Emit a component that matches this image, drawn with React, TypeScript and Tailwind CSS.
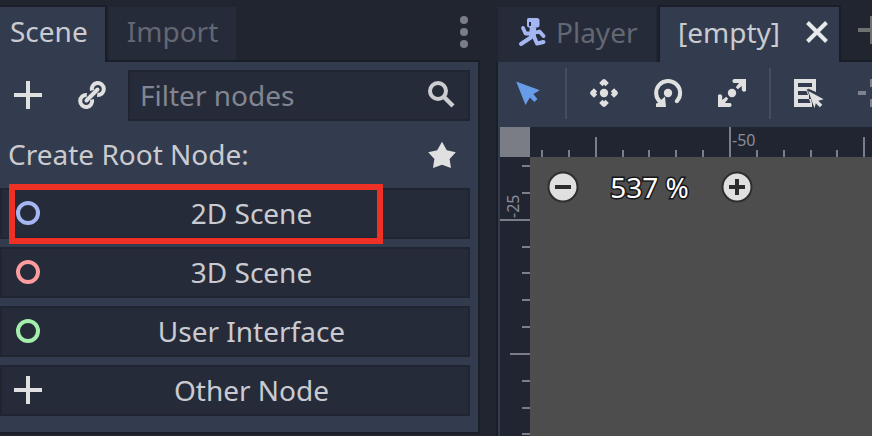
import type { ReactNode } from "react";

const topTicks = [541, 568, 595, 622, 648, 675, 702, 729, 756, 783, 810, 836, 863];
const leftTicks = [165, 192, 219, 246, 272, 299, 326, 353, 380, 407, 433];

function Icon({ children, className = "" }: { children: ReactNode; className?: string }) {
  return (
    <svg viewBox="0 0 32 32" fill="none" className={`size-8 shrink-0 ${className}`}>
      {children}
    </svg>
  );
}

function AddIcon({ className = "text-[#e0e0e0]" }: { className?: string }) {
  return (
    <Icon className={className}>
      <path d="M14 2h4v12h12v4H18v12h-4V18H2v-4h12z" fill="currentColor" />
    </Icon>
  );
}

function LinkIcon() {
  return (
    <Icon className="text-[#e0e0e0]">
      <g stroke="currentColor" strokeWidth="4">
        <path d="M16 11.500A6 6 0 1 1 21.200 16" />
        <path d="M10.800 16A6 6 0 1 0 16 20.500" />
        <path d="M10.500 21.500L21.500 10.500" strokeLinecap="round" />
      </g>
    </Icon>
  );
}

function SearchIcon() {
  return (
    <Icon className="text-[#cccdd0]">
      <circle cx="12" cy="12" r="8" stroke="currentColor" strokeWidth="4" />
      <path d="M17.500 17.500L27 27" stroke="currentColor" strokeWidth="4.400" />
    </Icon>
  );
}

function NodeCircle({ className }: { className: string }) {
  return (
    <Icon className={className}>
      <circle cx="16" cy="16" r="10" stroke="currentColor" strokeWidth="4" />
    </Icon>
  );
}

function RunnerIcon() {
  return (
    <Icon className="text-[#a5b7f3]">
      <path d="M12.500 2h8.500q2.500 0 2.500 2.500v4.500q0 2.500-2.500 2.500H13q-2 0-2-2V4q0-2 1.500-2z" fill="currentColor" />
      <path d="M14 6v4" stroke="#262b3a" strokeWidth="2" />
      <g stroke="currentColor" strokeWidth="4" strokeLinecap="round" strokeLinejoin="round">
        <path d="M17 11l-.5 10" strokeWidth="6.500" strokeLinecap="butt" />
        <path d="M7 12l2.500 5.500h6l8-2 4 4.500" strokeWidth="3.800" />
        <path d="M15.500 21L5 28" />
        <path d="M18 20.500l3 7 6.500-1.500" />
      </g>
    </Icon>
  );
}

function MoveIcon() {
  return (
    <Icon className="text-[#e0e0e0]">
      <circle cx="16" cy="16" r="4.200" fill="currentColor" />
      <path
        d="M12.800 7.600l3.200-3.200 3.200 3.200M12.800 24.400l3.200 3.200 3.200-3.200M7.600 12.800l-3.200 3.200 3.200 3.200M24.400 12.800l3.200 3.200-3.200 3.200"
        stroke="currentColor"
        strokeWidth="4.600"
        strokeLinejoin="round"
      />
    </Icon>
  );
}

function RotateIcon() {
  return (
    <Icon className="text-[#e0e0e0]">
      <circle cx="16" cy="16" r="4.200" fill="currentColor" />
      <path d="M8.300 25A12 12 0 1 1 25 24" stroke="currentColor" strokeWidth="4" />
      <circle cx="24.800" cy="24.200" r="2" fill="currentColor" />
      <path d="M4 30h10l-1-10.500-3.500 3L6 26l-2 .500z" fill="currentColor" />
    </Icon>
  );
}

function ScaleIcon() {
  return (
    <Icon className="text-[#e0e0e0]">
      <circle cx="16" cy="16" r="4.200" fill="currentColor" />
      <path
        d="M18 2h12v12q-3 1.800-4.200-1V9l-4 3.200-2-2L23 6h-5.500q-2.500-2.500.500-4zM14 30H2V18q3-1.800 4.200 1v4l4-3.200 2 2L9 26h5.500q2.500 2.500-.500 4z"
        fill="currentColor"
      />
    </Icon>
  );
}

function ListSelectIcon() {
  return (
    <Icon className="text-[#e0e0e0]">
      <path d="M2 2h22v13l-8-3.500L18 18h-1v4h2l1 4v4H2zM6 6v4h14V6zM6 14v4h10l-1.500-4zM6 22v4h12.500L17 22z" fill="currentColor" fillRule="evenodd" />
      <path d="M14.500 12L33 19l-9.300 14z" fill="#333b4e" />
      <path d="M16.300 14L31.700 22.300l-5.400 1.500 4 4-2.500 2.500-4-4-1.300 5z" fill="currentColor" />
    </Icon>
  );
}

function ZoomButton({ plus = false }: { plus?: boolean }) {
  return (
    <Icon>
      <circle cx="16" cy="16" r="14.500" fill="#e0e0e0" stroke="#2e2e2e" strokeWidth="2" />
      <path d={plus ? "M8 16h16M16 8v16" : "M8 16h16"} stroke="#2d2d2d" strokeWidth="4" />
    </Icon>
  );
}

function RootButton({ icon, label }: { icon: ReactNode; label: string }) {
  return (
    <button className="relative flex h-[51px] w-[470px] items-center justify-center border-2 border-[#212531] bg-[#262b3a] pb-px pl-[33px]">
      <span className="absolute left-2.5 top-[7px]">{icon}</span>
      <span>{label}</span>
    </button>
  );
}

function SceneDock() {
  return (
    <section className="flex h-[434px] w-[480px] shrink-0 flex-col">
      <header className="flex h-[62px] shrink-0 pt-[5px]">
        <div className="flex w-[107px] items-center border-r-2 border-t-2 border-[#1a1e28] bg-[#333b4e] pb-[7px] pl-2.5">Scene</div>
        <div className="flex flex-1 border-b-2 border-[#1a1e28] pl-0.5 pt-0.5">
          <div className="flex w-[127px] items-center justify-center bg-[#262b3a] pb-[5px] text-[#636771]">Import</div>
          <Icon className="ml-auto mt-[9px] text-[#7b7e87]">
            <g fill="currentColor">
              <circle cx="16" cy="4" r="4" />
              <circle cx="16" cy="16" r="4" />
              <circle cx="16" cy="28" r="4" />
            </g>
          </Icon>
        </div>
      </header>
      <div className="flex-1 border-b-2 border-r-2 border-[#1a1e28] bg-[#333b4e] pt-2">
        <div className="flex h-[51px] items-start pl-3">
          <AddIcon className="mt-[9px] text-[#e0e0e0]" />
          <span className="ml-8 mt-[9px]"><LinkIcon /></span>
          <div className="ml-5 flex h-[51px] w-[342px] items-center justify-between border-2 border-[#212531] bg-[#262b3a] pb-px pl-2.5 pr-2.5 text-[#828690]">
            <span>Filter nodes</span>
            <SearchIcon />
          </div>
        </div>
        <div className="flex h-[67px] items-center justify-between pb-px pl-2 pr-5">
          <span>Create Root Node:</span>
          <Icon className="text-[#e0e0e0]">
            <path d="M16 3.700l4.800 8.500 9 2-6.200 6.800 1.400 9L16 26.700l-9 3.300 1.400-9L2.200 14.200l9-2z" fill="currentColor" />
          </Icon>
        </div>
        <div className="relative flex flex-col gap-2">
          <RootButton icon={<NodeCircle className="text-[#a5b7f3]" />} label="2D Scene" />
          <RootButton icon={<NodeCircle className="text-[#fc9c9c]" />} label="3D Scene" />
          <RootButton icon={<NodeCircle className="text-[#a5efac]" />} label="User Interface" />
          <RootButton icon={<AddIcon />} label="Other Node" />
          <div className="absolute -top-1 left-[9px] h-[60px] w-[374px] border-[6px] border-[#ee3124]" />
        </div>
      </div>
    </section>
  );
}

function Toolbar() {
  return (
    <div className="flex h-[65px] shrink-0 items-start bg-[#333b4e] pt-[6px]">
      <div className="flex h-[51px] w-[374px] items-center overflow-hidden pb-px pl-3.5">
        <Icon>
          <path d="M4.200 4.500L27.800 13.300l-6.400 3.700 4 5-3 3-4.500-4.500-4.400 7.500z" fill="#699ce8" />
        </Icon>
        <i className="ml-[21px] h-[51px] w-0.5 shrink-0 self-start bg-[#464d5f]" />
        <span className="ml-[21px]"><MoveIcon /></span>
        <span className="ml-8"><RotateIcon /></span>
        <span className="ml-8"><ScaleIcon /></span>
        <i className="ml-[21px] h-[51px] w-0.5 shrink-0 self-start bg-[#464d5f]" />
        <span className="ml-[21px]"><ListSelectIcon /></span>
        <svg width="14" height="32" viewBox="0 0 14 32" className="ml-[34px] shrink-0">
          <path d="M0 14h8v4H0zM12 2h2v8h-2zM12 22h2v8h-2z" fill="#7d828d" />
        </svg>
      </div>
    </div>
  );
}

function Viewport() {
  return (
    <div className="relative flex h-[309px] flex-col bg-[#212531]">
      <div className="flex h-[30px] shrink-0">
        <div className="w-[30px] bg-[#7a7d86]" />
      </div>
      <div className="flex flex-1">
        <div className="w-[30px]" />
        <div className="flex flex-1 items-start bg-[#4d4d4d] pl-[17px] pt-[14px]">
          <ZoomButton />
          <span className="-mt-0.5 w-[142px] pr-px text-center text-white [paint-order:stroke_fill] [-webkit-text-stroke:3px_#161616]">537 %</span>
          <ZoomButton plus />
        </div>
      </div>
      <svg viewBox="500 127 372 309" className="absolute inset-0 h-[309px] w-[372px]" fill="#7b7e88" shapeRendering="crispEdges">
        {topTicks.map((x, i) => {
          const h = i === 7 ? 30 : i === 2 || i === 12 ? 20 : 7;
          return <rect key={x} x={x} y={157 - h} width="2" height={h} />;
        })}
        {leftTicks.map((y, i) => {
          const w = i === 2 ? 30 : i === 7 ? 20 : 8;
          return <rect key={y} x={530 - w} y={y} width={w} height="2" />;
        })}
      </svg>
      <span className="absolute left-[232px] top-[1px] text-base leading-6 text-[#8a8d98]">-50</span>
      <span className="absolute left-[1px] top-[67px] h-6 rotate-180 text-base leading-6 text-[#8a8d98] [writing-mode:vertical-rl]">-25</span>
    </div>
  );
}

export default function App() {
  return (
    <main className="flex h-[436px] w-[872px] overflow-hidden bg-[#212530] font-['Noto_Sans',sans-serif] text-[28px] leading-9 text-[#cacbd0]">
      <SceneDock />
      <section className="ml-4 flex w-[376px] shrink-0 flex-col">
        <header className="flex h-[62px] shrink-0 pt-[5px]">
          <div className="ml-0.5 mt-0.5 flex w-[158px] items-center bg-[#262b3a] pb-[5px] pl-[18px] text-[#636771]">
            <RunnerIcon />
            <span className="ml-2">Player</span>
          </div>
          <div className="ml-0.5 flex w-[183px] items-center border-x-2 border-t-2 border-[#1a1e28] bg-[#333b4e] pb-[5px] pl-[18px]">
            <span>[empty]</span>
            <Icon className="ml-auto mr-1.5 text-[#e8e9eb]">
              <path d="M6.500 6.500l19 19M25.500 6.500l-19 19" stroke="currentColor" strokeWidth="4" />
            </Icon>
          </div>
          <div className="flex flex-1 overflow-hidden border-b-2 border-[#1a1e28] pl-[15px] pt-[9px]">
            <AddIcon className="text-[#707172]" />
          </div>
        </header>
        <div className="flex-1 border-l-2 border-[#1a1e28] bg-[#333b4e]">
          <Toolbar />
          <div className="pl-0.5"><Viewport /></div>
        </div>
      </section>
    </main>
  );
}
